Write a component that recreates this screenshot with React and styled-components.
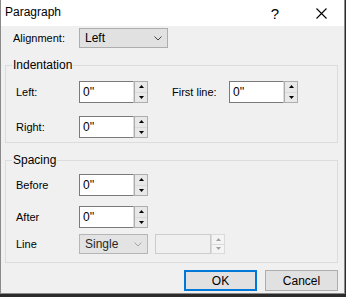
import React from "react";
import styled, { createGlobalStyle } from "styled-components";

const Global = createGlobalStyle`
  html, body { margin: 0; padding: 0; background: #2b2b2b; }
  body { font-family: "Liberation Sans", Arial, sans-serif; font-size: 11px; color: #000; }
`;

const Window = styled.div`
  width: 343px;
  height: 293px;
  background: #f0f0f0;
  border: 1px solid #8a8a8a;
  border-top: none;
  display: flex;
  flex-direction: column;
  overflow: hidden;
`;

const TitleBar = styled.div`
  height: 26px;
  background: #fff;
  display: flex;
  align-items: center;
  padding-left: 4px;
  font-size: 12px;
`;

const Title = styled.div`
  flex: 1;
  margin-top: -2px;
`;

const TitleButton = styled.div`
  width: 46px;
  height: 26px;
  display: flex;
  align-items: center;
  justify-content: center;
  font-size: 15px;
`;

const Body = styled.div`
  display: flex;
  flex-direction: column;
  padding: 2px 6px 0 4px;
`;

const Row = styled.div`
  display: flex;
  align-items: center;
  height: ${p => p.$h || 22}px;
  margin-top: ${p => p.$mt || 0}px;
  padding-left: ${p => p.$pl || 11}px;
`;

const Label = styled.span`
  width: ${p => p.$w || 63}px;
  flex: none;
`;

const Combo = styled.div`
  width: ${p => p.$w}px;
  height: 20px;
  box-sizing: border-box;
  border: 1px solid #adadad;
  background: #e1e1e1;
  display: flex;
  align-items: center;
  padding-left: 5px;
  font-size: 12px;
  opacity: ${p => (p.$dim ? 0.85 : 1)};
`;

const ComboText = styled.span`
  flex: 1;
`;

const Chevron = ({ color = "#444" }) => (
  <svg width="8" height="5" viewBox="0 0 8 5" style={{ marginRight: 5 }}>
    <path d="M0.5 0.5 L4 4 L7.5 0.5" fill="none" stroke={color} strokeWidth="1" />
  </svg>
);

const Group = styled.fieldset`
  margin: ${p => p.$mt}px 0 0 0;
  padding: 0;
  border: 1px solid #dcdcdc;
  min-width: 0;
  height: ${p => p.$h}px;
  box-sizing: border-box;
`;

const Legend = styled.legend`
  margin-left: 6px;
  padding: 0 1px;
  font-size: 12px;
  line-height: 13px;
`;

const Spin = styled.div`
  display: flex;
  height: ${p => p.$h || 22}px;
`;

const Field = styled.div`
  box-sizing: border-box;
  border: 1px solid ${p => (p.$off ? "#cccccc" : "#7a7a7a")};
  border-right-color: ${p => (p.$off ? "#cccccc" : "#dcdcdc")};
  background: ${p => (p.$off ? "#f0f0f0" : "#fff")};
  padding: 3px 0 0 3px;
  font-size: 12px;
  width: ${p => p.$w || 55}px;
`;

const Arrows = styled.div`
  width: 14px;
  display: flex;
  flex-direction: column;
  border: 1px solid ${p => (p.$off ? "#dadada" : "#adadad")};
  box-sizing: border-box;
  background: #f0f0f0;
`;

const Arrow = styled.div`
  flex: 1;
  display: flex;
  align-items: center;
  justify-content: center;
  background: ${p => (p.$off ? "#f4f4f4" : "#e8e8e8")};
  & + & { border-top: 1px solid ${p => (p.$off ? "#dadada" : "#adadad")}; }
`;

const Tri = ({ up, off }) => (
  <svg width="5" height="3" viewBox="0 0 5 3">
    <path d={up ? "M0 3 L2.5 0 L5 3 Z" : "M0 0 L5 0 L2.5 3 Z"} fill={off ? "#a0a0a0" : "#000"} />
  </svg>
);

const Spinner = ({ w, h, off }) => (
  <Spin $h={h}>
    <Field $w={w} $off={off}>{off ? "" : "0''"}</Field>
    <Arrows $off={off}>
      <Arrow $off={off}><Tri up off={off} /></Arrow>
      <Arrow $off={off}><Tri off={off} /></Arrow>
    </Arrows>
  </Spin>
);

const LineSpin = styled.div`
  margin-left: 7px;
  display: flex;
`;

const FirstLineLabel = styled(Label)`
  margin-left: 24px;
`;

const Footer = styled.div`
  display: flex;
  justify-content: flex-end;
  gap: 8px;
  margin-top: 7px;
`;

const Button = styled.button`
  width: 73px;
  height: 21px;
  box-sizing: border-box;
  background: #e1e1e1;
  border: ${p => (p.$def ? "2px solid #0078d7" : "1px solid #adadad")};
  font-family: inherit;
  font-size: 12px;
  padding: 0;
  color: #000;
`;

export default function App() {
  return (
    <>
      <Global />
      <Window>
        <TitleBar>
          <Title>Paragraph</Title>
          <TitleButton>?</TitleButton>
          <TitleButton>
            <svg width="11" height="11" viewBox="0 0 11 11">
              <path d="M0.5 0.5 L10.5 10.5 M10.5 0.5 L0.5 10.5" stroke="#000" strokeWidth="1.1" />
            </svg>
          </TitleButton>
        </TitleBar>
        <Body>
          <Row $h={20} $pl={8}>
            <Label $w={66}>Alignment:</Label>
            <Combo $w={89}>
              <ComboText>Left</ComboText>
              <Chevron />
            </Combo>
          </Row>
          <Group $mt={11} $h={84}>
            <Legend>Indentation</Legend>
            <Row $mt={9} $pl={10}>
              <Label>Left:</Label>
              <Spinner />
              <FirstLineLabel $w={57}>First line:</FirstLineLabel>
              <Spinner />
            </Row>
            <Row $mt={13} $pl={10}>
              <Label>Right:</Label>
              <Spinner />
            </Row>
          </Group>
          <Group $mt={11} $h={109}>
            <Legend>Spacing</Legend>
            <Row $mt={7} $pl={10}>
              <Label>Before</Label>
              <Spinner />
            </Row>
            <Row $mt={10} $pl={10}>
              <Label>After</Label>
              <Spinner />
            </Row>
            <Row $mt={6} $h={20} $pl={10}>
              <Label>Line</Label>
              <Combo $w={69} $dim>
                <ComboText>Single</ComboText>
                <Chevron color="#999" />
              </Combo>
              <LineSpin>
                <Spinner w={56} h={20} off />
              </LineSpin>
            </Row>
          </Group>
          <Footer>
            <Button $def>OK</Button>
            <Button>Cancel</Button>
          </Footer>
        </Body>
      </Window>
    </>
  );
}
